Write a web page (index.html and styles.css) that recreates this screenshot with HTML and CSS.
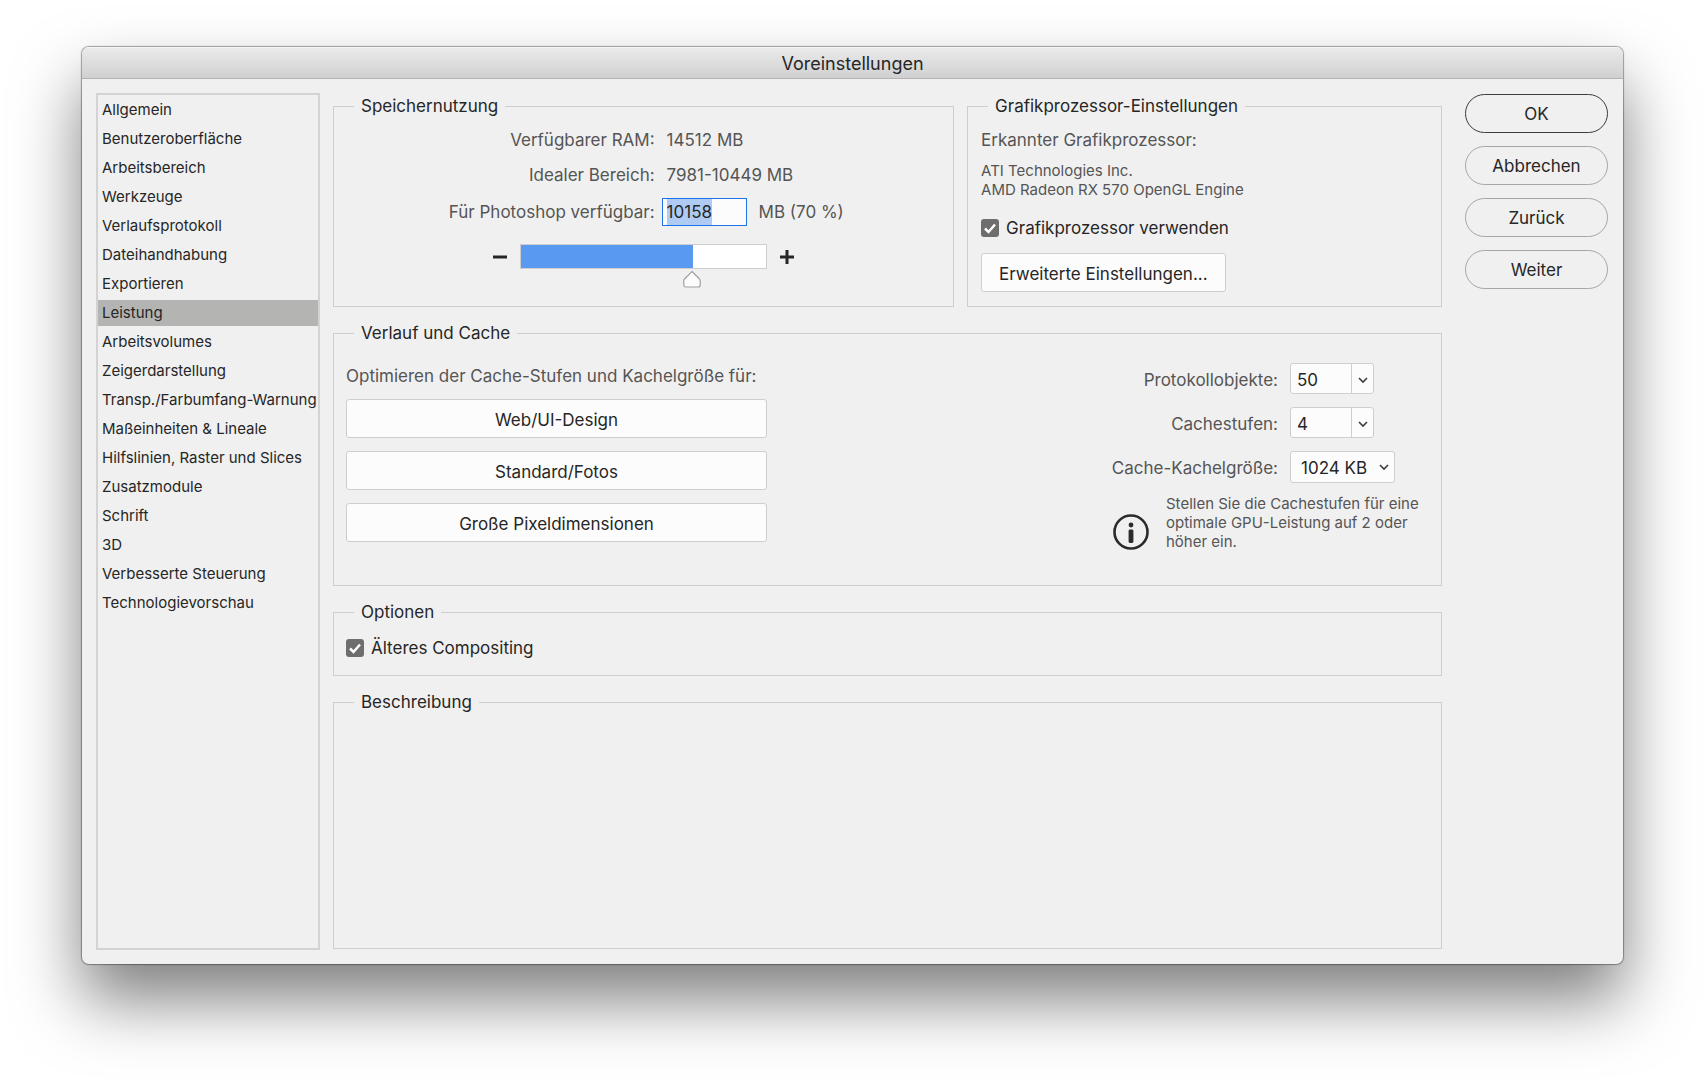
FILE: index.html
```html
<!DOCTYPE html>
<html lang="de">
<head>
    <meta charset="UTF-8">
    <meta name="viewport" content="width=device-width, initial-scale=1.0">
    <title>Voreinstellungen</title>
    <link rel="stylesheet" href="styles.css">
</head>
<body>
    <div class="window">
        <header class="titlebar">
            <h1>Voreinstellungen</h1>
        </header>
        <form class="content" id="preferencesForm">
            <nav class="sidebar">
                <a href="#">Allgemein</a>
                <a href="#">Benutzeroberfläche</a>
                <a href="#">Arbeitsbereich</a>
                <a href="#">Werkzeuge</a>
                <a href="#">Verlaufsprotokoll</a>
                <a href="#">Dateihandhabung</a>
                <a href="#">Exportieren</a>
                <a href="#" class="active">Leistung</a>
                <a href="#">Arbeitsvolumes</a>
                <a href="#">Zeigerdarstellung</a>
                <a href="#">Transp./Farbumfang-Warnung</a>
                <a href="#">Maßeinheiten &amp; Lineale</a>
                <a href="#">Hilfslinien, Raster und Slices</a>
                <a href="#">Zusatzmodule</a>
                <a href="#">Schrift</a>
                <a href="#">3D</a>
                <a href="#">Verbesserte Steuerung</a>
                <a href="#">Technologievorschau</a>
            </nav>

            <main class="panels">
                <div class="panel-row">
                    <fieldset class="memory">
                        <legend>Speichernutzung</legend>
                        <div class="memory-row">
                            <span class="label">Verfügbarer RAM:</span>
                            <span class="value">14512 MB</span>
                        </div>
                        <div class="memory-row">
                            <span class="label">Idealer Bereich:</span>
                            <span class="value">7981-10449 MB</span>
                        </div>
                        <div class="memory-row memory-input">
                            <label for="memory">Für Photoshop verfügbar:</label>
                            <div class="memory-field">
                                <input type="text" id="memory" name="memory" value="10158" autocomplete="off">
                                <span>MB (70 %)</span>
                            </div>
                        </div>
                        <div class="slider">
                            <button type="button" class="step" id="less" aria-label="Weniger">
                                <svg width="16" height="16" viewBox="0 0 16 16"><path d="M1 8h14"/></svg>
                            </button>
                            <input type="range" id="memoryRange" min="0" max="14220" value="10158" aria-label="Speicher">
                            <button type="button" class="step" id="more" aria-label="Mehr">
                                <svg width="16" height="16" viewBox="0 0 16 16"><path d="M1 8h14M8 1v14"/></svg>
                            </button>
                        </div>
                    </fieldset>

                    <fieldset class="gpu">
                        <legend>Grafikprozessor-Einstellungen</legend>
                        <p class="gpu-title">Erkannter Grafikprozessor:</p>
                        <p class="small">ATI Technologies Inc.<br>AMD Radeon RX 570 OpenGL Engine</p>
                        <div class="check">
                            <input type="checkbox" id="useGpu" checked>
                            <label for="useGpu">Grafikprozessor verwenden</label>
                        </div>
                        <button type="button" class="btn">Erweiterte Einstellungen...</button>
                    </fieldset>
                </div>

                <fieldset class="cache">
                    <legend>Verlauf und Cache</legend>
                    <div class="cache-body">
                        <div class="presets">
                            <p>Optimieren der Cache-Stufen und Kachelgröße für:</p>
                            <button type="button" class="btn">Web/UI-Design</button>
                            <button type="button" class="btn">Standard/Fotos</button>
                            <button type="button" class="btn">Große Pixeldimensionen</button>
                        </div>
                        <div class="cache-settings">
                            <div class="setting">
                                <label for="history">Protokollobjekte:</label>
                                <div class="combo">
                                    <input type="text" id="history" value="50">
                                    <button type="button" aria-label="Protokollobjekte wählen">
                                        <svg width="12" height="8" viewBox="0 0 12 8"><path d="M2 2l4 4 4-4"/></svg>
                                    </button>
                                </div>
                            </div>
                            <div class="setting">
                                <label for="levels">Cachestufen:</label>
                                <div class="combo">
                                    <input type="text" id="levels" value="4">
                                    <button type="button" aria-label="Cachestufen wählen">
                                        <svg width="12" height="8" viewBox="0 0 12 8"><path d="M2 2l4 4 4-4"/></svg>
                                    </button>
                                </div>
                            </div>
                            <div class="setting">
                                <label for="tile">Cache-Kachelgröße:</label>
                                <select id="tile">
                                    <option>1024 KB</option>
                                </select>
                            </div>
                            <div class="note">
                                <svg width="36" height="36" viewBox="0 0 36 36">
                                    <circle cx="18" cy="18" r="16.5" fill="none" stroke="#2b2b2b" stroke-width="2.6"/>
                                    <circle cx="18" cy="11" r="2.4" fill="#2b2b2b"/>
                                    <rect x="15.6" y="15.5" width="4.8" height="13.5" rx="1.4" fill="#2b2b2b"/>
                                </svg>
                                <p class="small">Stellen Sie die Cachestufen für eine optimale GPU-Leistung auf 2 oder höher ein.</p>
                            </div>
                        </div>
                    </div>
                </fieldset>

                <fieldset class="options">
                    <legend>Optionen</legend>
                    <div class="check">
                        <input type="checkbox" id="compositing" checked>
                        <label for="compositing">Älteres Compositing</label>
                    </div>
                </fieldset>

                <fieldset class="description">
                    <legend>Beschreibung</legend>
                </fieldset>
            </main>

            <div class="actions">
                <button type="submit" class="pill primary">OK</button>
                <button type="button" class="pill">Abbrechen</button>
                <button type="button" class="pill">Zurück</button>
                <button type="button" class="pill">Weiter</button>
            </div>
        </form>
    </div>

    <script>
        const memory = document.getElementById('memory');
        memory.focus();
        memory.select();

        document.getElementById('preferencesForm').addEventListener('submit', (e) => {
            e.preventDefault();
        });
    </script>
</body>
</html>
```

FILE: styles.css
```css
* {
    box-sizing: border-box;
}
body {
    display: flex;
    min-height: 100vh;
    margin: 0;
    padding: 47px 81px 115px 82px;
    background: #fff;
    color: #262626;
    font-family: Inter, "Liberation Sans", sans-serif;
    font-size: 17px;
    line-height: 24px;
}
p {
    margin: 0;
}
button, input, select {
    margin: 0;
    padding: 0;
    color: inherit;
    font: inherit;
}
.window {
    display: flex;
    flex: 1;
    flex-direction: column;
    overflow: hidden;
    border-radius: 7px;
    background: #f0f0f0;
    box-shadow: 0 0 1px 1px rgba(0, 0, 0, 0.35), 0 36px 66px rgba(0, 0, 0, 0.5);
}
.titlebar {
    height: 32px;
    border-bottom: 1px solid #b4b4b4;
    background: linear-gradient(#ebebeb, #d0d0d0);
    box-shadow: inset 0 1px #f5f5f5;
}
.titlebar h1 {
    margin: 0;
    font-size: 18px;
    font-weight: 400;
    line-height: 34px;
    text-align: center;
}
.content {
    display: flex;
    flex: 1;
    padding: 14px 15px 14px 14px;
}

/* Sidebar */
.sidebar {
    flex: none;
    width: 224px;
    margin-right: 13px;
    padding-top: 2px;
    border: 2px solid #d3d3d3;
}
.sidebar a {
    display: block;
    margin-bottom: 3px;
    padding-left: 4px;
    color: #262626;
    font-size: 15px;
    line-height: 26px;
    text-decoration: none;
    white-space: nowrap;
}
.sidebar a.active {
    background: #b4b4b2;
}

/* Panels */
.panels {
    display: flex;
    flex: 1;
    flex-direction: column;
    gap: 13px;
    min-width: 0;
    padding-bottom: 1px;
}
.panel-row {
    display: grid;
    grid-template-columns: 17fr 13fr;
    gap: 13px;
}
fieldset {
    min-width: 0;
    margin: 0;
    padding: 0 12px;
    border: 1px solid #cecece;
}
legend {
    margin-left: 8px;
    padding: 0 7px;
    line-height: 26px;
}
.memory {
    padding: 4px 0 18px;
    color: #555;
}
.memory legend {
    margin-left: 20px;
    color: #262626;
}
.memory-row {
    display: grid;
    grid-template-columns: 11fr 10fr;
    gap: 7px;
    line-height: 35px;
}
.memory-row .label, .memory-row label {
    text-align: right;
}
.memory-row .value {
    padding-left: 5px;
}
.memory-input {
    line-height: 38px;
}
.memory-field {
    display: flex;
    align-items: center;
    gap: 12px;
}
.memory-field input {
    width: 85px;
    height: 28px;
    padding-left: 4px;
    border: 1px solid #1a73e8;
    outline: none;
    background: #fcfcfc;
    color: #262626;
}
.memory-field input::selection {
    background: #afcbf3;
    color: #262626;
}
.slider {
    display: flex;
    align-items: flex-start;
    justify-content: center;
    gap: 12px;
    padding-top: 13px;
}
.step {
    display: flex;
    align-items: center;
    height: 25px;
    border: none;
    background: none;
}
.step path {
    fill: none;
    stroke: #262626;
    stroke-width: 3;
}
input[type="range"] {
    width: 247px;
    height: 44px;
    appearance: none;
    background: none;
}
input[type="range"]::-webkit-slider-runnable-track {
    align-self: flex-start;
    height: 25px;
    border: 1px solid #cecece;
    background: linear-gradient(to right, #5a99f2 70%, #fff 70%);
}
input[type="range"]::-webkit-slider-thumb {
    width: 18px;
    height: 18px;
    margin-top: 25px;
    appearance: none;
    background: url("data:image/svg+xml,%3Csvg xmlns='http://www.w3.org/2000/svg' viewBox='0 0 18 18'%3E%3Cpath d='M9 1.5L16.500 9c.4.5.7 1 .7 1.500V15c0 1.200-.8 2-2 2H2.800c-1.200 0-2-.8-2-2v-4.500c0-.5.3-1 .7-1.500z' fill='%23fcfcfc' stroke='%23a0a0a0' stroke-width='1.200'/%3E%3C/svg%3E");
}

.gpu {
    padding: 4px 13px 0;
}
.gpu legend {
    margin-left: 7px;
}
.gpu-title {
    color: #555;
    line-height: 35px;
}
.small {
    color: #555;
    font-size: 15px;
    line-height: 19px;
}
.gpu .small {
    margin-top: 3px;
}
.gpu .check {
    margin: 17px 0 13px;
}
.check {
    display: flex;
    align-items: center;
    gap: 7px;
}
.check input {
    width: 18px;
    height: 18px;
    border-radius: 3px;
    appearance: none;
    background: #6e6e6e;
}
.check input:checked {
    background: #6e6e6e url("data:image/svg+xml,%3Csvg xmlns='http://www.w3.org/2000/svg' viewBox='0 0 18 18'%3E%3Cpath d='M4 9.500l3.500 3.500L14 5.500' fill='none' stroke='%23fff' stroke-width='2.500'/%3E%3C/svg%3E");
}
.btn {
    height: 39px;
    padding: 3px 17px 0;
    border: 1px solid #cecece;
    border-radius: 3px;
    background: #fcfcfc;
}

.cache {
    padding: 17px 12px 34px;
}
.cache-body {
    display: flex;
    justify-content: space-between;
}
.presets {
    display: flex;
    flex-direction: column;
    gap: 13px;
    width: 421px;
    padding-top: 1px;
}
.presets p {
    margin-bottom: -2px;
    color: #555;
}
.cache-settings {
    display: flex;
    flex-direction: column;
    gap: 13px;
    width: 316px;
}
.setting {
    display: grid;
    grid-template-columns: 165px 1fr;
    gap: 12px;
    align-items: center;
    justify-items: start;
}
.setting label {
    justify-self: end;
    padding-top: 2px;
    color: #555;
    white-space: nowrap;
}
.combo {
    display: flex;
    height: 31px;
    border: 1px solid #cecece;
    border-radius: 3px;
    background: #fcfcfc;
}
.combo input {
    width: 60px;
    padding: 2px 0 0 6px;
    border: none;
    background: none;
}
.combo button {
    width: 22px;
    border: none;
    border-left: 1px solid #cecece;
    background: none;
}
.combo svg {
    display: block;
    margin: 3px auto 0;
}
.combo path {
    fill: none;
    stroke: #3c3c3c;
    stroke-width: 1.6;
}
select {
    width: 105px;
    height: 32px;
    padding: 2px 0 0 10px;
    border: 1px solid #cecece;
    border-radius: 3px;
    appearance: none;
    background: #fcfcfc url("data:image/svg+xml,%3Csvg xmlns='http://www.w3.org/2000/svg' width='12' height='8' viewBox='0 0 12 8'%3E%3Cpath d='M2 2l4 4 4-4' fill='none' stroke='%233c3c3c' stroke-width='1.600'/%3E%3C/svg%3E") no-repeat right 4px center;
}
.note {
    display: flex;
    align-items: center;
    gap: 17px;
    margin-top: -2px;
}
.note svg {
    flex: none;
    margin-top: 19px;
}

.options .check {
    padding: 11px 0 15px;
}
.description {
    flex: 1;
}

/* Dialog buttons */
.actions {
    display: flex;
    flex: none;
    flex-direction: column;
    gap: 13px;
    width: 143px;
    margin-left: 23px;
    padding-top: 1px;
}
.pill {
    height: 39px;
    border: 1px solid #a6a6a6;
    border-radius: 20px;
    background: none;
}
.pill.primary {
    border-color: #3c3c3c;
}
```
